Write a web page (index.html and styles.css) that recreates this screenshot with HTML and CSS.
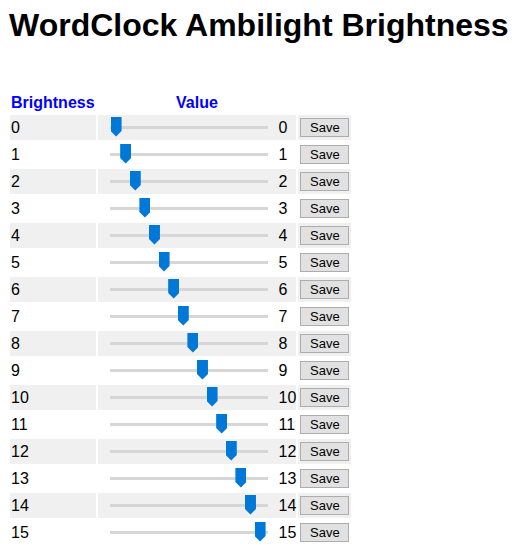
FILE: index.html
```html
<!DOCTYPE html>
<html lang="en">

<head>
    <meta charset="UTF-8">
    <title>WordClock Ambilight Brightness</title>
    <link rel="stylesheet" href="styles.css">
</head>

<body>
    <h1>WordClock Ambilight Brightness</h1>

    <table class="levels">
        <tr>
            <th class="col-name">Brightness</th>
            <th>Value</th>
            <th></th>
        </tr>
        <tr><td>0</td><td class="value"><input type="range" min="0" max="15" value="0"><span>0</span></td><td class="action"><button>Save</button></td></tr>
        <tr><td>1</td><td class="value"><input type="range" min="0" max="15" value="1"><span>1</span></td><td class="action"><button>Save</button></td></tr>
        <tr><td>2</td><td class="value"><input type="range" min="0" max="15" value="2"><span>2</span></td><td class="action"><button>Save</button></td></tr>
        <tr><td>3</td><td class="value"><input type="range" min="0" max="15" value="3"><span>3</span></td><td class="action"><button>Save</button></td></tr>
        <tr><td>4</td><td class="value"><input type="range" min="0" max="15" value="4"><span>4</span></td><td class="action"><button>Save</button></td></tr>
        <tr><td>5</td><td class="value"><input type="range" min="0" max="15" value="5"><span>5</span></td><td class="action"><button>Save</button></td></tr>
        <tr><td>6</td><td class="value"><input type="range" min="0" max="15" value="6"><span>6</span></td><td class="action"><button>Save</button></td></tr>
        <tr><td>7</td><td class="value"><input type="range" min="0" max="15" value="7"><span>7</span></td><td class="action"><button>Save</button></td></tr>
        <tr><td>8</td><td class="value"><input type="range" min="0" max="15" value="8"><span>8</span></td><td class="action"><button>Save</button></td></tr>
        <tr><td>9</td><td class="value"><input type="range" min="0" max="15" value="9"><span>9</span></td><td class="action"><button>Save</button></td></tr>
        <tr><td>10</td><td class="value"><input type="range" min="0" max="15" value="10"><span>10</span></td><td class="action"><button>Save</button></td></tr>
        <tr><td>11</td><td class="value"><input type="range" min="0" max="15" value="11"><span>11</span></td><td class="action"><button>Save</button></td></tr>
        <tr><td>12</td><td class="value"><input type="range" min="0" max="15" value="12"><span>12</span></td><td class="action"><button>Save</button></td></tr>
        <tr><td>13</td><td class="value"><input type="range" min="0" max="15" value="13"><span>13</span></td><td class="action"><button>Save</button></td></tr>
        <tr><td>14</td><td class="value"><input type="range" min="0" max="15" value="14"><span>14</span></td><td class="action"><button>Save</button></td></tr>
        <tr><td>15</td><td class="value"><input type="range" min="0" max="15" value="15"><span>15</span></td><td class="action"><button>Save</button></td></tr>
    </table>
</body>

</html>
```

FILE: styles.css
```css
body {
    margin: 7px 8px 8px;
    font-family: 'Liberation Sans', Arial, sans-serif;
    color: #000;
    background: #fff;
}

h1 {
    font-size: 32px;
    margin: 0 0 47px 1px;
}

.levels {
    border-spacing: 2px;
    font-size: 16px;
}

.levels th {
    color: #00f;
    font-weight: bold;
    padding: 1px;
}

.levels td {
    height: 23px;
    padding: 1px;
    vertical-align: middle;
}

/* striped rows */
.levels tr:nth-child(even) td {
    background-color: #f0f0f0;
}

.levels td.value {
    padding: 1px 0 1px 12px;
    white-space: nowrap;
}

.levels td.value span {
    display: inline-block;
    margin-left: 11px;
    vertical-align: middle;
}

.levels td.action {
    padding: 1px 2px 1px 2px;
}

/* slider: the line is drawn by the input itself, a bit wider than the thumb travel */
input[type=range] {
    -webkit-appearance: none;
    appearance: none;
    box-sizing: border-box;
    width: 158px;
    height: 20px;
    margin: 0 0 2px;
    padding: 0 2px 0 1px;
    background: linear-gradient(#d6d6d6, #d6d6d6) 0 9px / 100% 3px no-repeat;
    vertical-align: middle;
}

input[type=range]::-webkit-slider-runnable-track {
    height: 3px;
    background: transparent;
    border: none;
}

input[type=range]::-webkit-slider-thumb {
    -webkit-appearance: none;
    width: 11px;
    height: 20px;
    margin-top: -8.5px;
    background: #0078d7;
    border: none;
    clip-path: polygon(0 0, 100% 0, 100% 72%, 50% 100%, 0 72%);
}

button {
    font-family: 'Liberation Sans', Arial, sans-serif;
    font-size: 13px;
    width: 49px;
    height: 19px;
    margin: 0;
    padding: 0;
    background: #e1e1e1;
    border: 1px solid #adadad;
    color: #000;
    vertical-align: middle;
}
```
